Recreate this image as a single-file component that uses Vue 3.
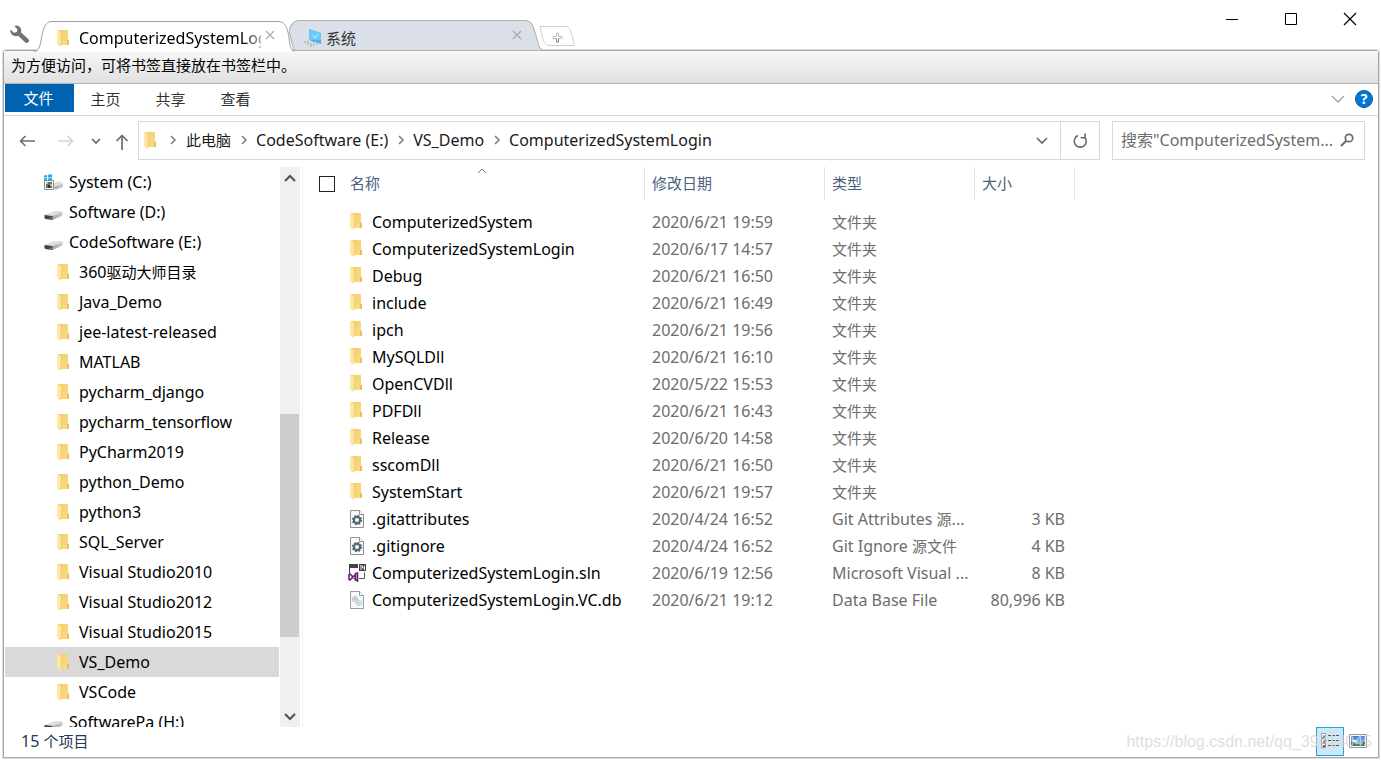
<script setup>
import { ref, h } from 'vue'

const MixedText = (props) =>
  h('span', { class: 'mixed' },
    (props.text.match(/[\u3000-\u9fff\uff00-\uffef]+|[^\u3000-\u9fff\uff00-\uffef]+/g) || []).map((run) =>
      h('span', { class: /[\u3000-\u9fff\uff00-\uffef]/.test(run) ? 'run-cjk' : 'run-latin' }, run)
    )
  )
MixedText.props = ['text']

const query = ref('')
const selected = ref('VS_Demo')
const crumbs = ['此电脑', 'CodeSoftware (E:)', 'VS_Demo', 'ComputerizedSystemLogin']
const menus = ['文件', '主页', '共享', '查看']

const tree = [
  { name: 'System (C:)', icon: 'system' },
  { name: 'Software (D:)', icon: 'drive' },
  { name: 'CodeSoftware (E:)', icon: 'drive' },
  ...['360驱动大师目录', 'Java_Demo', 'jee-latest-released', 'MATLAB', 'pycharm_django',
    'pycharm_tensorflow', 'PyCharm2019', 'python_Demo', 'python3', 'SQL_Server',
    'Visual Studio2010', 'Visual Studio2012', 'Visual Studio2015', 'VS_Demo', 'VSCode'
  ].map((name) => ({ name, icon: 'folder' })),
  { name: 'SoftwarePa (H:)', icon: 'drive' }
]

const folder = (name, date) => ({ name, date, type: '文件夹', size: '', icon: 'folder' })
const files = [
  folder('ComputerizedSystem', '2020/6/21 19:59'),
  folder('ComputerizedSystemLogin', '2020/6/17 14:57'),
  folder('Debug', '2020/6/21 16:50'),
  folder('include', '2020/6/21 16:49'),
  folder('ipch', '2020/6/21 19:56'),
  folder('MySQLDll', '2020/6/21 16:10'),
  folder('OpenCVDll', '2020/5/22 15:53'),
  folder('PDFDll', '2020/6/21 16:43'),
  folder('Release', '2020/6/20 14:58'),
  folder('sscomDll', '2020/6/21 16:50'),
  folder('SystemStart', '2020/6/21 19:57'),
  { name: '.gitattributes', date: '2020/4/24 16:52', type: 'Git Attributes 源...', size: '3 KB', icon: 'gear' },
  { name: '.gitignore', date: '2020/4/24 16:52', type: 'Git Ignore 源文件', size: '4 KB', icon: 'gear' },
  { name: 'ComputerizedSystemLogin.sln', date: '2020/6/19 12:56', type: 'Microsoft Visual ...', size: '8 KB', icon: 'sln' },
  { name: 'ComputerizedSystemLogin.VC.db', date: '2020/6/21 19:12', type: 'Data Base File', size: '80,996 KB', icon: 'db' }
]
</script>

<template>
  <div class="window">
    <svg class="defs" aria-hidden="true">
      <defs>
        <linearGradient id="gold" x1="0" y1="0" x2="1" y2="1">
          <stop offset="0" stop-color="#f3cd70" /><stop offset="1" stop-color="#fbdc83" />
        </linearGradient>
        <linearGradient id="metal" x1="0" y1="0" x2="1" y2="0">
          <stop offset="0" stop-color="#a4a6a9" /><stop offset="1" stop-color="#c9cbce" />
        </linearGradient>
        <linearGradient id="sky" x1="0" y1="0" x2="0" y2="1">
          <stop offset="0" stop-color="#347de0" /><stop offset="1" stop-color="#b4dcf3" />
        </linearGradient>
        <symbol id="i-folder" viewBox="0 0 12 17">
          <path d="M1 0h10v9l1 1v5H2z" fill="url(#gold)" />
          <path d="M10 10h2v5h-2z" fill="#e9bf5b" />
          <path d="M0 0h1l3 2.5V13l-.5 4L0 14.5z" fill="#ffe8a6" />
          <path d="M4 3v11l-.6 2" fill="none" stroke="#edc766" stroke-width=".5" />
        </symbol>
        <symbol id="i-drive" viewBox="0 0 18 18">
          <path d="M0 11L10 7h7l1 1-10 4z" fill="#dddfe2" />
          <path d="M8 12L18 8v3.500L8 16z" fill="url(#metal)" />
          <path d="M0 11l8 1v4l-7-1-1-1z" fill="#3e4041" />
          <path d="M5 14l2 .4" stroke="#57d35b" />
        </symbol>
        <symbol id="i-system" viewBox="0 0 19 18">
          <path d="M7 11l6-3.500h4l2 2-8 3.500z" fill="#dfe1e4" />
          <path d="M10 13l9-3.500V13l-8 2.800z" fill="url(#metal)" />
          <path d="M0 1.500l3-.5v2.500H0zM4 .8L8 .3v3.200H4zM0 4.300h3v2H0zM4 4.300h4v2H4z" fill="#18aeea" />
          <path d="M.5 6.500h9v9h-9z" fill="#f6f6f4" stroke="#8b8f92" />
          <path d="M2 8h6v6H2z" fill="#5d7378" />
          <path d="M2 8h2v2H2zM6 10h2v2H6z" fill="#b6c6a5" /><path d="M4 11h2v3H4z" fill="#2f3436" />
        </symbol>
        <symbol id="i-gear" viewBox="0 0 18 18">
          <path d="M2.500.5h9l4 4v13h-13z" fill="#f8f9f9" stroke="#8d9193" />
          <path d="M11.500.5v4h4" fill="#fff" stroke="#8d9193" />
          <circle cx="9" cy="10" r="3.100" fill="none" stroke="#536872" stroke-width="2.200" />
          <circle cx="9" cy="10" r="4.400" fill="none" stroke="#536872" stroke-width="1.600" stroke-dasharray="1.800 1.656" />
        </symbol>
        <symbol id="i-db" viewBox="0 0 18 18">
          <path d="M2.500.5h9l4 4v13h-13z" fill="#f8f9f9" stroke="#999b9c" />
          <path d="M11.500.5v4h4" fill="#fff" stroke="#999b9c" />
          <circle cx="7" cy="8" r="2.600" fill="#e4e8ea" stroke="#8e999f" stroke-dasharray="1 .6" />
          <circle cx="7" cy="8" r=".8" fill="#7d898f" />
          <circle cx="11" cy="12" r="2.600" fill="#e3f1f8" stroke="#77aecb" stroke-dasharray="1 .6" />
          <circle cx="11" cy="12" r=".8" fill="#fff" stroke="#77aecb" stroke-width=".5" />
        </symbol>
        <symbol id="i-sln" viewBox="0 0 18 18">
          <path d="M1 0h9v4H1z" fill="#414143" /><path d="M1.500 3v6" stroke="#414143" />
          <path d="M11 0h7v7h-7z" fill="#414143" />
          <path d="M12 2l1-.5v4.500M14.500 1.500V4h2M16.500 1.500V6" fill="none" stroke="#fff" stroke-width=".9" />
          <path d="M16.500 8.500v6H11" fill="none" stroke="#555" />
          <path d="M1 10.500v5l1 .5 5.500-5.500V16l2 1V9L7.500 9.500V15.500L2 10z" fill="none" stroke="#68217a" stroke-width="1.600" />
        </symbol>
        <symbol id="i-chev" viewBox="0 0 10 6"><path d="M1 1l4 4 4-4" fill="none" stroke="currentColor" stroke-width="1.700" /></symbol>
        <symbol id="i-x" viewBox="0 0 10 10"><path d="M1 1l8 8M9 1L1 9" fill="none" stroke="currentColor" stroke-width="1.200" /></symbol>
      </defs>
    </svg>

    <header class="strip">
      <button class="wrench" aria-label="设置">
        <svg width="20" height="20" viewBox="0 0 20 20"><path d="M4.500 1a5 5 0 0 1 6.500 6.300l7.700 7.100c1.500 1.800-1.700 4.800-3.400 3.200L8.200 10.800C4 12.300-.5 9 .5 4.500L4 7.800 6.800 7l.7-2.700L4.200 1z" fill="#727272" /></svg>
      </button>
      <div class="tab tab-active">
        <svg class="tab-shape" viewBox="0 0 260 31" preserveAspectRatio="none"><path d="M0 30.500C7 30 6 21 9 10 11 4 13 .5 18 .5H244C250 .5 252 4 254 11 256 20 255 28 260 30.500" fill="#fff" stroke="#a0a0a0" /></svg>
        <svg class="folder"><use href="#i-folder" /></svg>
        <span class="tab-title fade">ComputerizedSystemLogin</span>
        <button class="tab-close" aria-label="关闭标签"><svg width="10" height="10"><use href="#i-x" /></svg></button>
      </div>
      <div class="tab tab-idle">
        <svg class="tab-shape" viewBox="0 0 252 31" preserveAspectRatio="none"><path d="M0 10C2 4 5 .5 10 .5H234C242 .5 243 9 246 19 248 26 248 28 252 30.500H6C2 25 2 17 0 10z" fill="#dbe0e8" stroke="#aeb1b5" /></svg>
        <svg class="pc" viewBox="0 0 20 18"><path d="M6 0l12 4v11L6 11z" fill="#45b2f0" /><path d="M6 0l12 4v7L6 11z" fill="#68c8fa" /><path d="M10 6l2 3 3-4" fill="none" stroke="#d9f3ff" /><path d="M1 13h5M4 15h11M9 12.500h4M7 17h4" stroke="#9da5aa" stroke-dasharray="2 1" /></svg>
        <span class="tab-title cjk">系统</span>
        <button class="tab-close" aria-label="关闭标签"><svg width="10" height="10"><use href="#i-x" /></svg></button>
      </div>
      <button class="new-tab" aria-label="新标签">
        <svg width="36" height="20" viewBox="0 0 36 20"><path d="M1 .5h26C32 .5 34 12 35 19.500H11C4 19.500 3 10 1 .5z" fill="#fff" stroke="#cfcfcf" /><path d="M17.500 7h2v3.500H23v2h-3.500V16h-2v-3.500H14v-2h3.500z" fill="#fff" stroke="#b0b0b0" stroke-width=".8" /><path d="M17.500 12.500V16h2v-3.500" fill="none" stroke="#888" /></svg>
      </button>
      <div class="controls">
        <button aria-label="最小化"><svg width="14" height="14"><path d="M1 7.500h12" stroke="#000" /></svg></button>
        <button aria-label="最大化"><svg width="14" height="14"><path d="M1.500 1.500h11v11h-11z" fill="none" stroke="#000" /></svg></button>
        <button aria-label="关闭"><svg width="14" height="14"><path d="M1 1l12 12M13 1L1 13" stroke="#000" stroke-width="1.200" /></svg></button>
      </div>
    </header>

    <main class="frame">
      <div class="bookmarks">为方便访问，可将书签直接放在书签栏中。</div>

      <nav class="ribbon">
        <button v-for="(m, i) in menus" :key="m" :class="['menu', { primary: i === 0 }]">{{ m }}</button>
        <button class="ribbon-toggle" aria-label="展开功能区"><svg width="14" height="8" viewBox="0 0 14 8"><path d="M1 1l6 6 6-6" fill="none" stroke="#a0a0a0" stroke-width="1.300" /></svg></button>
        <button class="help" aria-label="帮助">?</button>
      </nav>

      <div class="location">
        <button class="nav back" aria-label="后退"><svg width="16" height="12" viewBox="0 0 16 12"><path d="M6.500 1l-5 5 5 5M1.500 6H16" fill="none" stroke="#6e6e6e" stroke-width="1.600" /></svg></button>
        <button class="nav forward" aria-label="前进"><svg width="16" height="12" viewBox="0 0 16 12"><path d="M9.500 1l5 5-5 5M14.500 6H0" fill="none" stroke="#d5d5d5" stroke-width="1.600" /></svg></button>
        <button class="nav recent" aria-label="最近位置"><svg width="10" height="6"><use href="#i-chev" /></svg></button>
        <button class="nav up" aria-label="上一级"><svg width="14" height="16" viewBox="0 0 14 16"><path d="M1.500 7L7 1.500 12.500 7M7 1.500V16" fill="none" stroke="#6e6e6e" stroke-width="1.700" /></svg></button>
        <div class="address">
          <svg class="folder"><use href="#i-folder" /></svg>
          <template v-for="c in crumbs" :key="c">
            <svg class="sep" viewBox="0 0 6 10"><path d="M1 1l4 4-4 4" fill="none" stroke="#777" stroke-width="1.500" /></svg>
            <a href="#" class="crumb"><MixedText :text="c" /></a>
          </template>
          <button class="addr-drop" aria-label="历史记录"><svg width="12" height="8" viewBox="0 0 12 8"><path d="M1 1l5 5 5-5" fill="none" stroke="#666" stroke-width="1.600" /></svg></button>
          <button class="refresh" aria-label="刷新"><svg width="16" height="16" viewBox="0 0 16 16"><path d="M12.800 4.200A6 6 0 1 1 6 2.600" fill="none" stroke="#6a6a6a" stroke-width="1.600" /><path d="M13 .5v4.200H8.500" fill="none" stroke="#6a6a6a" stroke-width="1.600" /></svg></button>
        </div>
        <label class="search">
          <input v-model="query" type="text" aria-label="搜索" placeholder='搜索"ComputerizedSystem...' />
          <svg width="14" height="14" viewBox="0 0 14 14"><circle cx="9" cy="5" r="3.700" fill="none" stroke="#6a6a6a" stroke-width="1.700" /><path d="M6.300 7.700L1 13" stroke="#6a6a6a" stroke-width="2" /></svg>
        </label>
      </div>

      <div class="body">
        <aside class="tree">
          <ul>
            <li v-for="n in tree" :key="n.name">
              <button :class="['node', n.icon, { selected: n.name === selected }]" @click="selected = n.name">
                <svg :class="n.icon === 'folder' ? 'folder' : 'disk'"><use :href="'#i-' + n.icon" /></svg>
                <MixedText :text="n.name" />
              </button>
            </li>
          </ul>
        </aside>
        <div class="scrollbar">
          <button aria-label="向上滚动"><svg class="flip" width="12" height="8" viewBox="0 0 12 8"><path d="M1 1l5 5 5-5" fill="none" stroke="#505050" stroke-width="2" /></svg></button>
          <div class="track"><div class="thumb"></div></div>
          <button aria-label="向下滚动"><svg width="12" height="8" viewBox="0 0 12 8"><path d="M1 1l5 5 5-5" fill="none" stroke="#505050" stroke-width="2" /></svg></button>
        </div>
        <section class="listing">
          <table>
            <colgroup><col class="c-name" /><col class="c-date" /><col class="c-type" /><col class="c-size" /></colgroup>
            <thead>
              <tr>
                <th class="th-name">
                  <div class="name-head"><input type="checkbox" aria-label="全选" /><span>名称</span></div>
                  <svg class="sort" width="10" height="6" viewBox="0 0 10 6"><path d="M1 5l4-4 4 4" fill="none" stroke="#777" /></svg>
                </th>
                <th>修改日期</th><th>类型</th><th>大小</th>
              </tr>
            </thead>
            <tbody>
              <tr v-for="f in files" :key="f.name">
                <td class="td-name">
                  <div class="file">
                    <span class="slot"><svg :class="f.icon === 'folder' ? 'folder' : 'doc'"><use :href="'#i-' + f.icon" /></svg></span>
                    <MixedText :text="f.name" />
                  </div>
                </td>
                <td>{{ f.date }}</td>
                <td><MixedText :text="f.type" /></td>
                <td class="size">{{ f.size }}</td>
              </tr>
            </tbody>
          </table>
        </section>
      </div>

      <footer class="status">
        <MixedText class="count" text="15 个项目" />
        <div class="views">
          <button class="view on" aria-label="详细信息"><svg width="20" height="18" viewBox="0 0 20 18"><path d="M1.500 1.500h4v4h-4zM1.500 6.500h4v4h-4zM1.500 11.500h4v4h-4z" fill="#fff" stroke="#999" /><path d="M3 3h2v2H3z" fill="#31679a" /><path d="M3 8h2v2H3z" fill="#a86a43" /><path d="M3 13h2v2H3z" fill="#d72b1f" /><path d="M8 3.500h11M8 8.500h11M8 13.500h11" stroke="#555" stroke-dasharray="3 1" /></svg></button>
          <button class="view" aria-label="大图标"><svg width="18" height="14" viewBox="0 0 18 14"><path d="M.5.5h17v13H.5z" fill="#fff" stroke="#999" /><path d="M2 2h14v10H2z" fill="url(#sky)" /><path d="M2 7l4 2 4 0 6-1v4H2z" fill="#41745e" /><path d="M3 6h5v2H3z" fill="#e7f1fa" /></svg></button>
        </div>
        <span class="mark">https://blog.csdn.net/qq_39714045</span>
      </footer>
    </main>
  </div>
</template>

<style>
body { margin: 0; background: #fff; }
.mixed .run-cjk { font-size: 15px; }
.mixed { white-space: pre; }
</style>

<style scoped>
* { box-sizing: border-box; }
.window {
  height: 100vh;
  display: flex;
  flex-direction: column;
  font: 16px/24px "Noto Sans", "Noto Sans CJK SC", sans-serif;
  color: #000;
  overflow: hidden;
}
button { border: 0; padding: 0; background: none; font: inherit; color: inherit; display: flex; align-items: center; justify-content: center; }
svg { display: block; flex: none; }
.defs { position: absolute; width: 0; height: 0; }
.folder { width: 12px; height: 17px; }
.cjk { font-size: 15px; }

.strip { display: flex; align-items: flex-end; flex: none; height: 50px; padding-left: 10px; }
.wrench { margin-bottom: 5px; width: 20px; height: 20px; }
.tab { position: relative; display: flex; align-items: center; height: 31px; padding-top: 3px; }
.tab-shape { position: absolute; left: 0; top: 0; width: 100%; height: 100%; }
.tab > :not(.tab-shape) { position: relative; }
.tab-active { width: 260px; margin: 0 0 -2px 4px; padding-left: 23px; z-index: 1; }
.tab-idle { width: 254px; margin: 0 0 -1px -5px; padding: 4px 0 0 14px; color: #333; }
.tab-title { margin-left: 10px; flex: 1; min-width: 0; overflow: hidden; white-space: nowrap; }
.tab-idle .tab-title { margin-left: 3px; }
.fade { -webkit-mask-image: linear-gradient(90deg, #000 90%, transparent 106%); mask-image: linear-gradient(90deg, #000 90%, transparent 106%); }
.tab-close { width: 16px; height: 16px; margin: 0 16px 6px 1px; color: #aaa; }
.tab-idle .tab-close { margin-right: 18px; }
.pc { width: 20px; height: 18px; }
.new-tab { margin: 0 0 4px -4px; width: 36px; height: 20px; }
.controls { display: flex; align-self: flex-start; margin-left: auto; padding-right: 2px; }
.controls button { width: 59px; height: 38px; }

.frame {
  flex: 1; min-height: 0; display: flex; flex-direction: column;
  margin: 0 2px 2px 3px; border: 1px solid #a6a6a6; border-radius: 3px 3px 0 0;
  box-shadow: 0 0 0 1px #dcdcdc;
}
.bookmarks { flex: none; height: 33px; padding-left: 7px; line-height: 28px; font-size: 15px; background: linear-gradient(#f7f7f7, #e0e0e0); border-bottom: 1px solid #b4b4b4; }
.ribbon { flex: none; display: flex; align-items: flex-start; height: 32px; padding: 0 5px 0 1px; border-bottom: 1px solid #dadada; color: #333; font-size: 15px; }
.menu { width: 65px; height: 30px; padding-right: 2px; }
.menu.primary { width: 69px; height: 28px; background: #0063b1; color: #fff; }
.ribbon-toggle { margin-left: auto; width: 26px; height: 30px; }
.help { width: 18px; height: 18px; margin: 6px 0 0 4px; border-radius: 50%; background: #0078d7; border: 1px solid #10549a; color: #fff; font-size: 14px; font-weight: 700; line-height: 16px; }

.location { flex: none; display: flex; align-items: center; height: 51px; padding: 0 13px 2px 15px; color: #666; }
.nav { height: 32px; }
.back { width: 16px; }
.forward { width: 16px; margin-left: 23px; }
.recent { width: 10px; margin-left: 17px; }
.up { width: 14px; margin-left: 14px; padding-top: 2px; }
.address { flex: 1; min-width: 0; height: 39px; margin-left: 9px; padding-left: 5px; display: flex; align-items: center; border: 1px solid #d9d9d9; }
.sep { width: 6px; height: 10px; margin: 0 9px 2px 10px; }
.folder + .sep { margin-left: 14px; margin-right: 10px; }
.crumb { color: #1a1a1a; text-decoration: none; padding-bottom: 2px; }
.addr-drop { margin-left: auto; width: 36px; height: 37px; }
.refresh { width: 39px; height: 37px; border-left: 1px solid #d9d9d9; }
.search { display: flex; align-items: center; width: 253px; height: 39px; margin-left: 12px; padding: 0 10px 2px 8px; border: 1px solid #d9d9d9; }
.search input { flex: 1; min-width: 0; border: 0; padding: 0; outline: 0; font: inherit; background: none; }
.search input::placeholder { color: #6d6d6d; opacity: 1; }

.body { flex: 1; min-height: 0; display: flex; }
.tree { width: 275px; overflow: hidden; padding-left: 1px; }
.tree ul { list-style: none; margin: 0; padding: 0; }
.node { width: 100%; height: 30px; justify-content: flex-start; padding-left: 39px; gap: 6px; }
.node.folder { width: 100%; height: 30px; padding-left: 52px; gap: 10px; }
.disk { width: 19px; height: 18px; margin-top: 2px; }
.selected { background: #d9d9d9; }
.scrollbar { width: 20px; display: flex; flex-direction: column; margin-left: 1px; background: #f0f0f0; }
.scrollbar button { height: 21px; padding-right: 1px; }
.track { flex: 1; display: flex; flex-direction: column; padding-top: 226px; }
.thumb { height: 223px; margin-right: 1px; background: #cdcdcd; }
.flip { transform: rotate(180deg); }

.listing { flex: 1; min-width: 0; margin-left: 2px; border-left: 1px solid #f3f3f3; overflow: hidden; }
table { table-layout: fixed; width: 772px; border-collapse: separate; border-spacing: 0; }
.c-name { width: 342px; } .c-date { width: 180px; } .c-type { width: 150px; } .c-size { width: 100px; }
th { position: relative; height: 33px; padding: 0 0 2px 7px; border-right: 1px solid #e2e2e2; color: #4b5f80; font-size: 15px; font-weight: 400; text-align: left; }
.th-name { padding: 0 0 0 16px; }
.name-head { display: flex; align-items: center; gap: 15px; }
.name-head span { padding-bottom: 2px; }
.name-head input { appearance: none; width: 16px; height: 16px; margin: 0; border: 1px solid #222; background: #fff; }
.sort { position: absolute; left: 174px; top: 1px; }
tbody::before { content: ""; display: block; height: 8px; }
td { height: 27px; padding: 0 0 0 7px; color: #6d6d6d; white-space: nowrap; overflow: hidden; }
.td-name { padding-left: 45px; color: #000; }
.file { display: flex; align-items: center; }
.slot { width: 24px; display: flex; padding-left: 2px; }
.doc { width: 18px; height: 18px; margin-left: -2px; }
.size { padding-right: 10px; text-align: right; }

.status { position: relative; flex: none; display: flex; align-items: center; justify-content: space-between; height: 30px; padding: 0 6px 2px 17px; color: #1e395b; }
.views { display: flex; }
.view { width: 28px; height: 29px; }
.on { background: #cce8f6; border: 1px solid #26a0da; }
.mark { position: absolute; right: 6px; top: 4px; font: 16px/22px "Liberation Sans", sans-serif; color: rgba(214, 214, 214, 0.8); pointer-events: none; }
</style>
